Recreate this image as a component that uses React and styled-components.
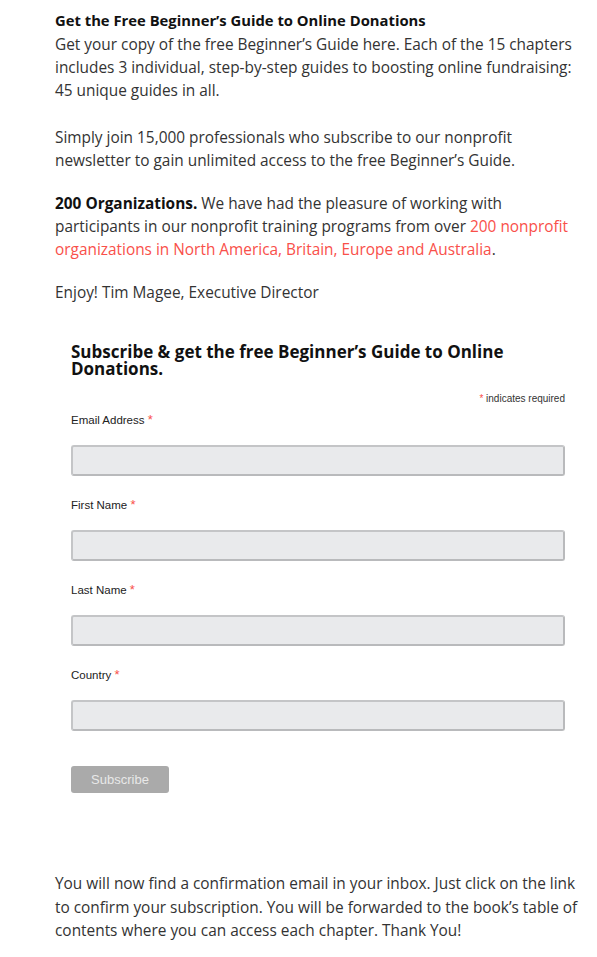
import React from 'react'
import styled, { createGlobalStyle } from 'styled-components'

const TEXT = `#333333`
const HEAD = `#111111`
const LINK = `#f9504a`
const FIELD_BG = `#e9eaec`
const FIELD_BORDER = `#b9babc`

const GlobalStyle = createGlobalStyle`
  html, body {
    margin: 0;
    padding: 0;
    background: #ffffff;
  }
  body {
    font-family: 'Open Sans', 'DejaVu Sans', sans-serif;
    color: ${TEXT};
  }
`

const Page = styled.div`
  box-sizing: border-box;
  padding: 9px 16px 20px 55px;
  width: 597px;
`

const Title = styled.h3`
  color: ${HEAD};
  font-size: 14.8px;
  font-weight: 700;
  line-height: 22px;
  margin: 0 0 2px;
`

const Para = styled.p`
  font-size: 15.4px;
  line-height: 23px;
  margin: 0 0 ${(p) => p.gap || 20}px;
`

const Strong = styled.strong`
  color: ${HEAD};
  font-weight: 700;
`

const Link = styled.a`
  color: ${LINK};
  text-decoration: none;
`

const SignupForm = styled.form`
  box-sizing: border-box;
  margin-top: 39px;
  padding: 0 16px;
  font-family: 'Liberation Sans', Arial, sans-serif;
`

const FormHeading = styled.h2`
  color: ${HEAD};
  font-family: 'Open Sans', 'DejaVu Sans', sans-serif;
  font-size: 17px;
  font-weight: 700;
  line-height: 17px;
  margin: 0 0 15px;
`

const Required = styled.div`
  color: #333;
  font-size: 10px;
  line-height: 14px;
  text-align: right;
  margin-bottom: 6px;
`

const Star = styled.span`
  color: ${LINK};
  font-size: ${(p) => (p.small ? 10 : 13)}px;
`

const Field = styled.div`
  display: flex;
  flex-direction: column;
  margin-bottom: 21px;
`

const Label = styled.label`
  color: #222;
  font-size: 11.5px;
  line-height: 16px;
  margin-bottom: 17px;
`

const Input = styled.input`
  box-sizing: border-box;
  width: 100%;
  height: 31px;
  background: ${FIELD_BG};
  border: 2px solid ${FIELD_BORDER};
  border-top-color: #c4c5c7;
  border-left-color: #c4c5c7;
  border-radius: 3px;
  outline: none;
  padding: 0 8px;
`

const Button = styled.button`
  box-sizing: border-box;
  margin-top: 14px;
  width: 98px;
  height: 27px;
  background: #aaaaaa;
  border: none;
  border-radius: 3px;
  color: #e8e8e8;
  font-family: 'Liberation Sans', Arial, sans-serif;
  font-size: 13px;
  padding: 0;
`

const Closing = styled(Para)`
  line-height: 23.5px;
  margin-top: 79px;
`

const fields = ['Email Address', 'First Name', 'Last Name', 'Country']

export default function App() {
  return (
    <Page>
      <GlobalStyle />
      <Title>Get the Free Beginner’s Guide to Online Donations</Title>
      <Para gap={24}>
        Get your copy of the free Beginner’s Guide here. Each of the 15 chapters
        includes 3 individual, step-by-step guides to boosting online fundraising:
        45 unique guides in all.
      </Para>
      <Para>
        Simply join 15,000 professionals who subscribe to our nonprofit
        newsletter to gain unlimited access to the free Beginner’s Guide.
      </Para>
      <Para>
        <Strong>200 Organizations.</Strong> We have had the pleasure of working with
        participants in our nonprofit training programs from over{' '}
        <Link href="#">200 nonprofit organizations in North America, Britain, Europe and Australia</Link>.
      </Para>
      <Para gap={0}>Enjoy! Tim Magee, Executive Director</Para>

      <SignupForm onSubmit={(e) => e.preventDefault()}>
        <FormHeading>Subscribe &amp; get the free Beginner’s Guide to Online Donations.</FormHeading>
        <Required>
          <Star small>*</Star> indicates required
        </Required>
        {fields.map((f) => (
          <Field key={f}>
            <Label>
              {f} <Star>*</Star>
            </Label>
            <Input type="text" />
          </Field>
        ))}
        <Button type="submit">Subscribe</Button>
      </SignupForm>

      <Closing gap={0}>
        You will now find a confirmation email in your inbox. Just click on the link
        to confirm your subscription. You will be forwarded to the book’s table of
        contents where you can access each chapter. Thank You!
      </Closing>
    </Page>
  )
}
